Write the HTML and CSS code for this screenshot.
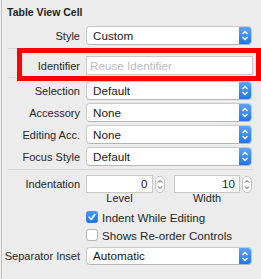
FILE: index.html
```html
<!DOCTYPE html>
<html lang="en">
<head>
    <meta charset="UTF-8">
    <title>Table View Cell</title>
    <link rel="stylesheet" href="styles.css">
</head>
<body>
    <div class="inspector">
        <h2 class="title">Table View Cell</h2>

        <div class="row">
            <label class="label">Style</label>
            <div class="popup">
                <span class="popup-value">Custom</span>
                <span class="popup-arrows">
                    <svg width="12" height="17" viewBox="0 0 12 17"><path d="M3.5 7 L6 4.5 L8.5 7 M3.5 10 L6 12.5 L8.5 10" fill="none" stroke="#fff" stroke-width="1.3"/></svg>
                </span>
            </div>
        </div>

        <div class="ident-group">
            <div class="row ident-row">
                <label class="label">Identifier</label>
                <input class="text-field" type="text" placeholder="Reuse Identifier">
            </div>
            <div class="highlight"></div>
        </div>

        <div class="row">
            <label class="label">Selection</label>
            <div class="popup">
                <span class="popup-value">Default</span>
                <span class="popup-arrows">
                    <svg width="12" height="17" viewBox="0 0 12 17"><path d="M3.5 7 L6 4.5 L8.5 7 M3.5 10 L6 12.5 L8.5 10" fill="none" stroke="#fff" stroke-width="1.3"/></svg>
                </span>
            </div>
        </div>
        <div class="row">
            <label class="label">Accessory</label>
            <div class="popup">
                <span class="popup-value">None</span>
                <span class="popup-arrows">
                    <svg width="12" height="17" viewBox="0 0 12 17"><path d="M3.5 7 L6 4.5 L8.5 7 M3.5 10 L6 12.5 L8.5 10" fill="none" stroke="#fff" stroke-width="1.3"/></svg>
                </span>
            </div>
        </div>
        <div class="row">
            <label class="label">Editing Acc.</label>
            <div class="popup">
                <span class="popup-value">None</span>
                <span class="popup-arrows">
                    <svg width="12" height="17" viewBox="0 0 12 17"><path d="M3.5 7 L6 4.5 L8.5 7 M3.5 10 L6 12.5 L8.5 10" fill="none" stroke="#fff" stroke-width="1.3"/></svg>
                </span>
            </div>
        </div>
        <div class="row">
            <label class="label">Focus Style</label>
            <div class="popup">
                <span class="popup-value">Default</span>
                <span class="popup-arrows">
                    <svg width="12" height="17" viewBox="0 0 12 17"><path d="M3.5 7 L6 4.5 L8.5 7 M3.5 10 L6 12.5 L8.5 10" fill="none" stroke="#fff" stroke-width="1.3"/></svg>
                </span>
            </div>
        </div>

        <div class="divider"></div>

        <div class="row indent-row">
            <label class="label">Indentation</label>
            <div class="steppers">
                <div class="stepper-group">
                    <div class="stepper-line">
                        <div class="number-field">0</div>
                        <svg class="stepper" width="10" height="17" viewBox="0 0 10 17"><rect x="0.5" y="0.5" width="9" height="16" rx="4.5" fill="#fff" stroke="#c2c2c2"/><path d="M3 6.5 L5 4.5 L7 6.5 M3 10.5 L5 12.5 L7 10.5" fill="none" stroke="#4a4a4a" stroke-width="1"/></svg>
                    </div>
                    <div class="sub-label">Level</div>
                </div>
                <div class="stepper-group">
                    <div class="stepper-line">
                        <div class="number-field">10</div>
                        <svg class="stepper" width="10" height="17" viewBox="0 0 10 17"><rect x="0.5" y="0.5" width="9" height="16" rx="4.5" fill="#fff" stroke="#c2c2c2"/><path d="M3 6.5 L5 4.5 L7 6.5 M3 10.5 L5 12.5 L7 10.5" fill="none" stroke="#4a4a4a" stroke-width="1"/></svg>
                    </div>
                    <div class="sub-label">Width</div>
                </div>
            </div>
        </div>

        <div class="row check-row">
            <span></span>
            <div class="check">
                <span class="box checked">
                    <svg width="12" height="12" viewBox="0 0 12 12"><path d="M3.2 6.2 L5.2 8.4 L8.8 3.6" fill="none" stroke="#fff" stroke-width="1.6" stroke-linecap="round" stroke-linejoin="round"/></svg>
                </span>
                <span>Indent While Editing</span>
            </div>
        </div>
        <div class="row check-row">
            <span></span>
            <div class="check">
                <span class="box"></span>
                <span>Shows Re-order Controls</span>
            </div>
        </div>

        <div class="row last-popup">
            <label class="label">Separator Inset</label>
            <div class="popup">
                <span class="popup-value">Automatic</span>
                <span class="popup-arrows">
                    <svg width="12" height="17" viewBox="0 0 12 17"><path d="M3.5 7 L6 4.5 L8.5 7 M3.5 10 L6 12.5 L8.5 10" fill="none" stroke="#fff" stroke-width="1.3"/></svg>
                </span>
            </div>
        </div>
    </div>
</body>
</html>
```

FILE: styles.css
```css
body {
    margin: 0;
    background-color: #ececec;
    font-family: 'Liberation Sans', Arial, sans-serif;
    color: #262626;
}

.inspector {
    margin-left: 1px;
    border-left: 1px solid #c3c3c3;
    height: 279px;
    box-sizing: border-box;
    overflow: hidden;
}

.title {
    margin: 6px 0 7px 5px;
    font-size: 10.5px;
    line-height: 13px;
    font-weight: 700;
    color: #1e1e1e;
}

.row {
    display: grid;
    grid-template-columns: 78px 166px;
    column-gap: 6px;
    align-items: center;
    margin-bottom: 3px;
}

.label {
    text-align: right;
    font-size: 11px;
    white-space: nowrap;
}

/* popup buttons */
.popup {
    display: flex;
    align-items: stretch;
    height: 19px;
    box-sizing: border-box;
    background: #fff;
    border: 1px solid #c9c9c9;
    border-bottom-color: #b5b5b5;
    border-radius: 4px;
    overflow: hidden;
}

.popup-value {
    flex: 1;
    padding-left: 6px;
    font-size: 11.7px;
    line-height: 17px;
    color: #202020;
}

.popup-arrows {
    width: 12px;
    display: flex;
    background: linear-gradient(#5ea3fc, #1f74ef);
}

/* identifier block */
.ident-group {
    position: relative;
    margin: 2px 8px 3px 6px;
    padding: 7px 0 2px;
    border-top: 1px solid #d6d6d6;
    border-bottom: 1px solid #d6d6d6;
}

.ident-row {
    grid-template-columns: 72px 167px;
    margin-bottom: 0;
}

.text-field {
    height: 19px;
    box-sizing: border-box;
    margin: 0;
    padding: 0 3px;
    border: 1px solid #c8c8c8;
    background: #fff;
    font-family: inherit;
    font-size: 11.7px;
    outline: none;
}

.text-field::placeholder {
    color: #bcbcbc;
}

.highlight {
    position: absolute;
    left: 9px;
    top: -1px;
    width: 244px;
    height: 33px;
    box-sizing: border-box;
    border: 5px solid #fe0000;
}

.divider {
    margin: 0 8px 5px 6px;
    border-top: 1px solid #d6d6d6;
}

/* indentation */
.indent-row {
    align-items: start;
    margin-bottom: 7px;
}

.indent-row .label {
    line-height: 18px;
}

.steppers {
    display: flex;
    gap: 9px;
}

.stepper-group {
    width: 79px;
}

.stepper-line {
    display: flex;
    align-items: center;
    gap: 2px;
}

.number-field {
    flex: 1;
    height: 18px;
    box-sizing: border-box;
    border: 1px solid #c8c8c8;
    background: #fff;
    text-align: right;
    padding-right: 4px;
    font-size: 11.7px;
    line-height: 16px;
}

.stepper {
    display: block;
}

.sub-label {
    width: 67px;
    text-align: center;
    font-size: 11px;
    line-height: 11px;
}

/* checkboxes */
.check-row {
    margin-bottom: 6px;
}

.check {
    display: flex;
    align-items: center;
    gap: 4px;
    height: 12px;
    font-size: 11.6px;
    white-space: nowrap;
}

.box {
    width: 12px;
    height: 12px;
    box-sizing: border-box;
    border: 1px solid #b3b3b3;
    border-radius: 3px;
    background: #fff;
    display: flex;
}

.box.checked {
    border: none;
    background: linear-gradient(#4a98fb, #1a73ee);
}

.last-popup .popup {
    height: 18px;
}

.last-popup .popup-value {
    line-height: 16px;
}
```
